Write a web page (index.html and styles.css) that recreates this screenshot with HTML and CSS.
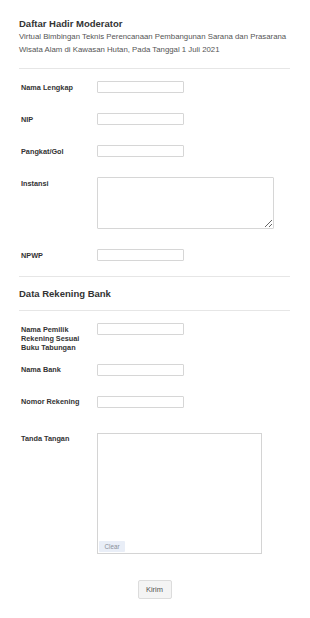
FILE: index.html
```html
<!DOCTYPE html>
<html lang="en">
<head>
  <meta charset="UTF-8">
  <meta name="viewport" content="width=device-width, initial-scale=1.0">
  <title>Daftar Hadir Moderator</title>
  <link rel="stylesheet" href="styles.css">
</head>
<body>
  <form class="form">
    <div class="form-header">
      <h1 class="form-title">Daftar Hadir Moderator</h1>
      <p class="form-desc">Virtual Bimbingan Teknis Perencanaan Pembangunan Sarana dan Prasarana Wisata Alam di Kawasan Hutan, Pada Tanggal 1 Juli 2021</p>
    </div>

    <div class="fields">
      <div class="row">
        <label class="label">Nama Lengkap</label>
        <input class="input" type="text">
      </div>
      <div class="row">
        <label class="label">NIP</label>
        <input class="input" type="text">
      </div>
      <div class="row">
        <label class="label">Pangkat/Gol</label>
        <input class="input" type="text">
      </div>
      <div class="row">
        <label class="label">Instansi</label>
        <textarea class="textarea"></textarea>
      </div>
      <div class="row row-last">
        <label class="label">NPWP</label>
        <input class="input" type="text">
      </div>
    </div>

    <div class="section-head">
      <h2 class="section-title">Data Rekening Bank</h2>
    </div>

    <div class="fields">
      <div class="row row-tall">
        <label class="label">Nama Pemilik Rekening Sesuai Buku Tabungan</label>
        <input class="input" type="text">
      </div>
      <div class="row">
        <label class="label">Nama Bank</label>
        <input class="input" type="text">
      </div>
      <div class="row row-wide">
        <label class="label">Nomor Rekening</label>
        <input class="input" type="text">
      </div>
      <div class="row row-end">
        <label class="label">Tanda Tangan</label>
        <div class="signature">
          <button type="button" class="clear-btn">Clear</button>
        </div>
      </div>
    </div>

    <div class="actions">
      <button type="button" class="submit-btn">Kirim</button>
    </div>
  </form>
</body>
</html>
```

FILE: styles.css
```css
* {
  margin: 0;
  padding: 0;
  box-sizing: border-box;
}

body {
  font-family: 'Liberation Sans', Arial, sans-serif;
  background: #fff;
  color: #2e2e2e;
}

.form {
  width: 310px;
  padding: 18px 20px 0 19px;
}

.form-header {
  padding-bottom: 12px;
  border-bottom: 1px solid #e6e6e6;
}

.form-title {
  font-size: 9.5px;
  font-weight: 700;
  color: #333;
  line-height: 12px;
}

.form-desc {
  font-size: 7.8px;
  color: #555;
  line-height: 13px;
}

.fields {
  padding: 12px 0 0 2px;
}

.row {
  display: flex;
  align-items: flex-start;
  padding-bottom: 20px;
}

.row-tall {
  padding-bottom: 12px;
}

.row-wide {
  padding-bottom: 25px;
}

.row-last {
  padding-bottom: 15px;
}

.row-end {
  padding-bottom: 0;
}

.label {
  width: 76px;
  flex-shrink: 0;
  font-size: 7.3px;
  font-weight: 700;
  line-height: 9px;
  padding: 1.5px 10px 0 0;
  color: #333;
}

.input {
  width: 87px;
  height: 12px;
  border: 1px solid #d6d6d6;
  border-radius: 1px;
  background: #fff;
}

.textarea {
  width: 177px;
  height: 52px;
  border: 1px solid #d6d6d6;
  border-radius: 1px;
  resize: vertical;
  font-family: inherit;
}

.section-head {
  padding: 11px 0 10px;
  border-top: 1px solid #e6e6e6;
  border-bottom: 1px solid #e6e6e6;
}

.section-title {
  font-size: 9.5px;
  font-weight: 700;
  color: #333;
  line-height: 12px;
}

.signature {
  width: 165px;
  height: 121px;
  border: 1px solid #d4d4d4;
  display: flex;
  align-items: flex-end;
  padding: 0 0 1px 1px;
}

.clear-btn {
  font-family: inherit;
  font-size: 6.3px;
  color: #8a8f99;
  background: #e9eef7;
  border: none;
  border-radius: 1px;
  width: 26px;
  height: 11px;
  cursor: pointer;
}

.actions {
  display: flex;
  justify-content: center;
  padding: 26px 0 19px;
}

.submit-btn {
  font-family: inherit;
  font-size: 7.5px;
  color: #555;
  background: #f4f4f4;
  border: 1px solid #dcdcdc;
  border-radius: 2px;
  width: 34px;
  height: 19px;
  cursor: pointer;
}
```
